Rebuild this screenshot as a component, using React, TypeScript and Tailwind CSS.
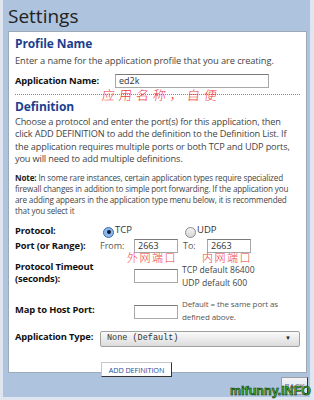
import React from 'react';

const labelCls = "font-bold text-[9.4px] text-[#111] leading-[12px] whitespace-nowrap tracking-[-0.15px]";

const TextBox: React.FC<{ value?: string; className?: string }> = ({ value, className }) => (
  <div
    className={`h-[14px] border border-[#a8a8a8] border-t-[#7a7a7a] bg-white px-[3px] text-[9px] leading-[12px] text-[#333] ${className ?? ''}`}
  >
    {value}
  </div>
);

const Radio: React.FC<{ checked?: boolean; label: string }> = ({ checked, label }) => (
  <div className="flex items-start">
    <div
      className={`mt-[2px] w-[11px] h-[11px] rounded-full border flex items-center justify-center ${
        checked ? 'border-[#3a6fb0] bg-[#8fb8e8]' : 'border-[#8a8a8a] bg-gradient-to-b from-[#f4f4f4] to-[#d6d6d6]'
      }`}
    >
      {checked && <div className="w-[4px] h-[4px] rounded-full bg-[#0a1a3a]" />}
    </div>
    <span className="ml-[1px] text-[9.5px] leading-[10px] text-[#333]">{label}</span>
  </div>
);

const App: React.FC = () => {
  return (
    <div className="relative w-[314px] h-[400px] overflow-hidden bg-[#dfe6ef] font-['Open_Sans',sans-serif]">
      <div className="ml-[3px] w-[307px] h-[397px] bg-[#adc3de] pt-[5px]">
        {/* Title */}
        <h1 className="pl-[5px] text-[19px] leading-[22px] text-[#222]">Settings</h1>

        {/* Panel */}
        <div className="mt-[4px] ml-[5px] w-[299px] h-[342px] bg-white border border-[#9ea9b8] pl-[6px] pr-[6px] pt-[5px]">
          {/* Profile Name */}
          <h2 className="font-bold text-[12px] leading-[14px] text-[#1b3f8f] tracking-[-0.1px]">Profile Name</h2>
          <p className="mt-[4px] text-[9.3px] leading-[12px] text-[#444] tracking-[-0.1px]">
            Enter a name for the application profile that you are creating.
          </p>
          <div className="mt-[7px] flex items-center">
            <span className={`${labelCls} w-[100px]`}>Application Name:</span>
            <TextBox value="ed2k" className="w-[154px]" />
          </div>
          <div className="mt-[6px] border-t border-dotted border-[#888]" />

          {/* Definition */}
          <h2 className="mt-[5px] font-bold text-[12px] leading-[14px] text-[#1b3f8f] tracking-[-0.1px]">Definition</h2>
          <p className="mt-[1.5px] text-[9.2px] leading-[12.5px] text-[#444] tracking-[-0.15px]">
            Choose a protocol and enter the port(s) for this application, then click ADD DEFINITION to add the
            definition to the Definition List. If the application requires multiple ports or both TCP and UDP ports,
            you will need to add multiple definitions.
          </p>
          <p className="mt-[6.5px] text-[8.1px] leading-[11px] text-[#444] tracking-[-0.15px]">
            <span className="font-bold text-[#222]">Note:</span> In some rare instances, certain application types
            require specialized firewall changes in addition to simple port forwarding. If the application you are
            adding appears in the application type menu below, it is recommended that you select it
          </p>

          {/* Protocol */}
          <div className="mt-[8.5px] flex h-[14px]">
            <span className={`${labelCls} w-[88px]`}>Protocol:</span>
            <div className="w-[82px]">
              <Radio checked label="TCP" />
            </div>
            <div>
              <Radio label="UDP" />
            </div>
          </div>

          {/* Port */}
          <div className="flex items-center h-[14px]">
            <span className={`${labelCls} w-[85px]`}>Port (or Range):</span>
            <span className="w-[34px] text-[9px] text-[#555]">From:</span>
            <TextBox value="2663" className="w-[44px]" />
            <span className="ml-[5px] w-[24px] text-[9px] text-[#555]">To:</span>
            <TextBox value="2663" className="w-[44px]" />
          </div>

          {/* Timeout */}
          <div className="mt-[8px] flex">
            <div className={`${labelCls} w-[119px]`}>
              Protocol Timeout
              <br />
              (seconds):
            </div>
            <TextBox className="mt-[8px] w-[44px]" />
            <div className="mt-[3px] ml-[4px] text-[8.6px] leading-[13px] text-[#444]">
              TCP default 86400
              <br />
              UDP default 600
            </div>
          </div>

          {/* Map to host */}
          <div className="mt-[7px] flex">
            <span className={`${labelCls} w-[119px] pt-[7px]`}>Map to Host Port:</span>
            <TextBox className="mt-[8px] w-[44px]" />
            <div className="ml-[4px] text-[8px] leading-[13px] text-[#555] tracking-[-0.1px]">
              Default = the same port as
              <br />
              defined above.
            </div>
          </div>

          {/* Application type */}
          <div className="mt-[8px] flex items-start">
            <span className={`${labelCls} w-[85px]`}>Application Type:</span>
            <div className="w-[200px] h-[16px] flex items-center justify-between border border-[#a0a0a0] rounded-[2px] bg-gradient-to-b from-[#fafafa] to-[#dcdcdc] pl-[6px] pr-[8px]">
              <span className="font-['Liberation_Mono',monospace] text-[8.5px] text-[#333]">None (Default)</span>
              <span className="text-[6px] text-[#222]">▼</span>
            </div>
          </div>

          {/* Add definition */}
          <div className="mt-[8px] ml-[86px]">
            <button className="h-[15px] w-[71px] bg-white border border-[#c8c8c8] border-r-[#333] border-b-[#333] text-[7.3px] leading-[12px] text-[#2a4a9a] tracking-[-0.1px] whitespace-nowrap">
              ADD DEFINITION
            </button>
          </div>
        </div>

        {/* Back */}
        <div className="mt-[4px] flex justify-end pr-[2px]">
          <button className="h-[18px] w-[27px] border border-[#a0a0a0] border-r-[#333] bg-gradient-to-b from-[#f2f4f7] to-[#d8dde4] text-[8px] leading-[12px] text-[#5a6a8a]">
            BACK
          </button>
        </div>
      </div>

      {/* Red handwritten annotations */}
      <div className="absolute left-[102px] top-[88px] text-[13px] leading-[14px] tracking-[4px] text-[#f03a3a] font-['Noto_Sans_CJK_SC',sans-serif] font-light -skew-x-6">
        应用名称，自便
      </div>
      <div className="absolute left-[127px] top-[251px] text-[11px] leading-[12px] tracking-[1.5px] text-[#f03a3a] font-['Noto_Sans_CJK_SC',sans-serif] font-light">
        外网端口
      </div>
      <div className="absolute left-[202px] top-[251px] text-[11px] leading-[12px] tracking-[1.5px] text-[#f03a3a] font-['Noto_Sans_CJK_SC',sans-serif] font-light">
        内网端口
      </div>

      {/* Watermark */}
      <div
        className="absolute right-[3px] bottom-[2px] text-[12.5px] leading-[14px] font-bold text-[#3fae2a] font-['Liberation_Sans',sans-serif]"
        style={{ WebkitTextStroke: '0.5px #0b2a0b' }}
      >
        mifunny.INFO
      </div>
    </div>
  );
};

export default App;
